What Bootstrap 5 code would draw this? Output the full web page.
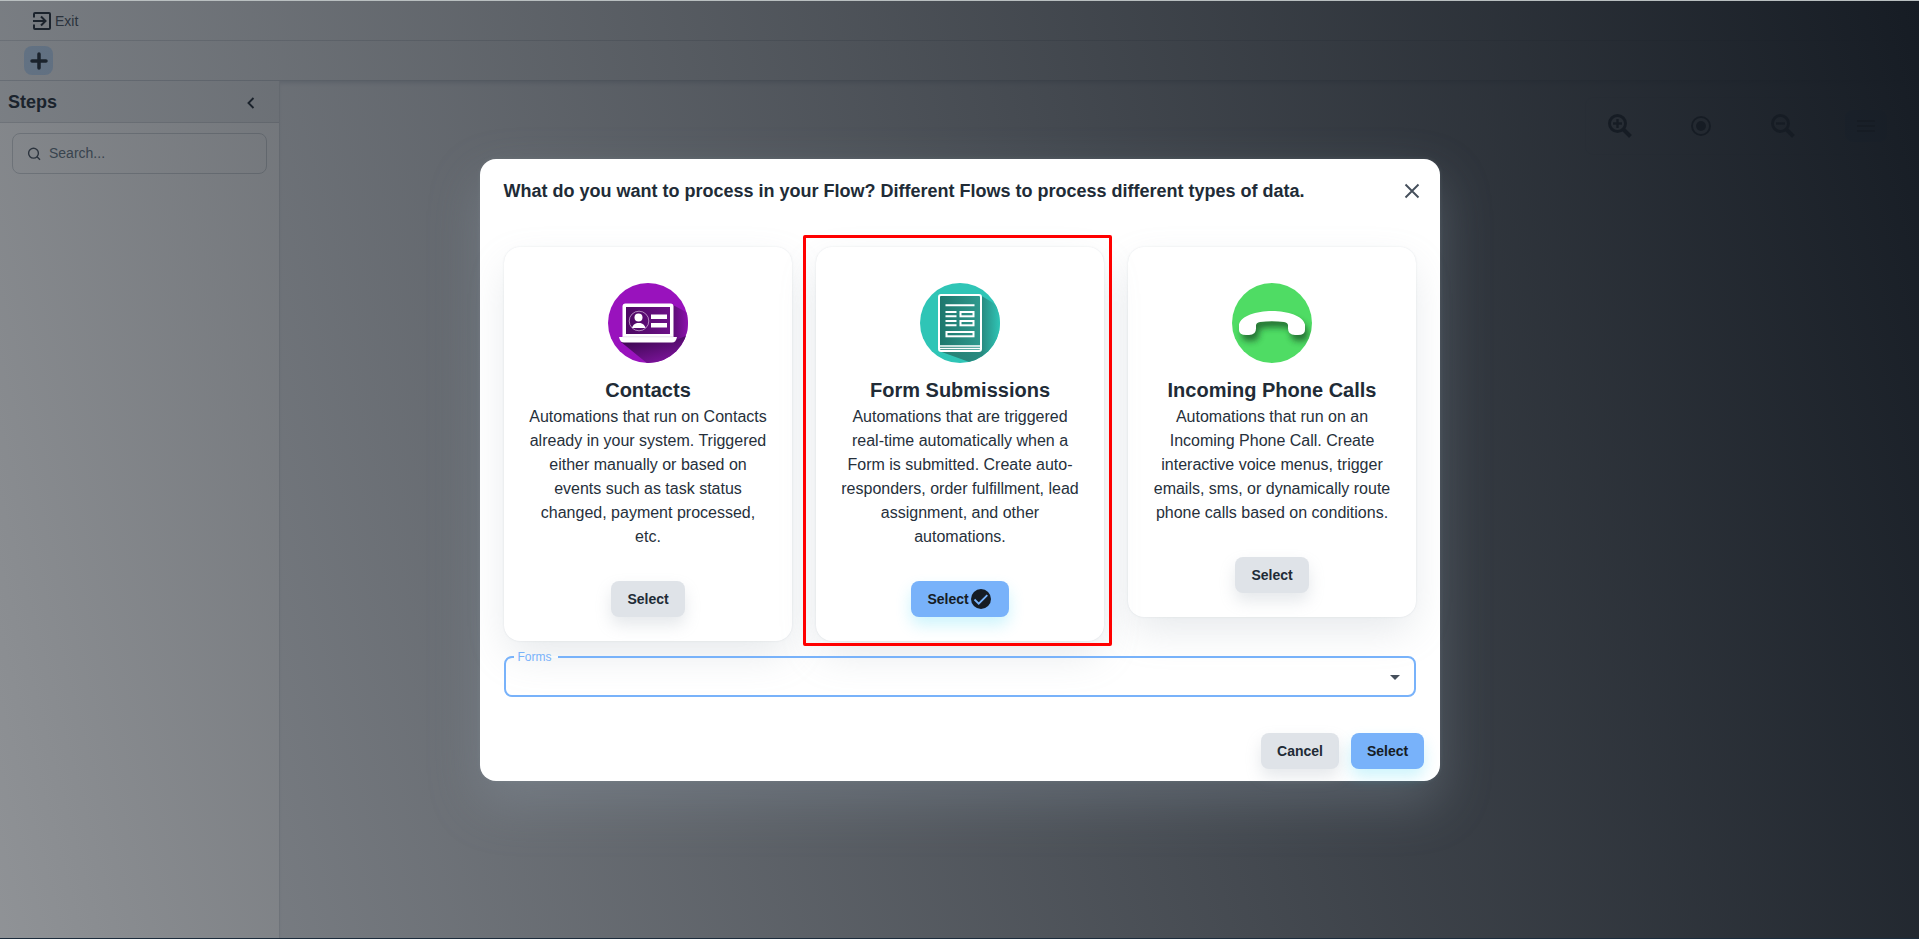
<!DOCTYPE html>
<html lang="en">
<head>
<meta charset="utf-8">
<title>Flow builder</title>
<link href="https://cdn.jsdelivr.net/npm/bootstrap@5.3.0/dist/css/bootstrap.min.css" rel="stylesheet">
<style>
  :root { --ink: #212b36; --grey: #dfe3e8; --blue: #78b2fa; }
  body { font-family: "Liberation Sans", Arial, sans-serif; color: var(--ink); overflow: hidden; background: #fff; }
  .app { height: 939px; background: #fff; }
  .topbar { height: 41px; padding-top: 2px; background: #eceef0; border-bottom: 1px solid #cdd1d6; padding-left: 32px; font-size: 14px; color: #454f5b; }
  .toolbar { height: 40px; background: #eceef0; border-bottom: 1px solid #c6cbd2; padding-left: 24px; }
  .add-btn { width: 29px; height: 29px; border-radius: 8px; background: #bcd6f2; }
  .sidebar { width: 280px; border-right: 1px solid #d9dce0; background: #fff; }
  .side-head { height: 42px; padding: 2px 21px 0 8px; border-bottom: 1px solid #d3d6da; background: #eceef0; font-size: 18px; font-weight: 700; }
  .search-box { margin: 10px 12px; height: 41px; border: 1px solid #d0d4d8; border-radius: 8px; padding-left: 14px; font-size: 14px; color: #637381; }
  .canvas { background: #ebedf0; box-shadow: inset 0 4px 4px -2px #c9ced6; padding: 16px 8px 0 0; }
  .zoom-panel { width: 326px; height: 58px; border: 1px solid #dde0e4; border-radius: 8px; padding: 0 26px 0 21px; }
  .menu-btn { width: 42px; height: 32px; border-radius: 8px; background: #9cc6f5; margin-right: -3px; }
  .veil { background: linear-gradient(75deg, rgba(22,28,36,.48) 0%, rgb(22,28,36) 100%); border-top: 1px solid #b9bfc0; border-bottom: 1px solid #1c2c3c; }
  .dialog { width: 960px; height: 622px; margin-top: 158px; border-radius: 16px; background: #fff; padding: 0 24px;
    box-shadow: 0 0 4px rgba(145,158,171,.2), 0 22px 50px 2px rgba(145,158,171,.3); }
  .dialog-head { height: 88px; padding-bottom: 24px; margin-right: -4px; }
  .dialog-head h2 { font-size: 18px; font-weight: 700; padding-top: 1px; }
  .option { width: 288px; border-radius: 16px; padding: 36px 24px 24px; background: #fff;
    box-shadow: 0 0 2px rgba(145,158,171,.24), 0 16px 40px -4px rgba(145,158,171,.24); }
  .option h3 { font-size: 20px; line-height: 30px; font-weight: 700; margin: 12px 0 0; padding-left: 1px; }
  .option p { font-size: 16px; line-height: 24px; margin: 0 -4px 32px; padding-left: 1px; color: #26303b; }
  .act { height: 36px; border-radius: 8px; font-size: 14px; font-weight: 700; padding: 0 0 0 1px; display: inline-flex; align-items: center; justify-content: center; border: 0; }
  .act-grey { background: var(--grey); color: var(--ink); box-shadow: 0 8px 16px rgba(145,158,171,.24); }
  .act-blue { background: var(--blue); color: #161c24; box-shadow: 0 8px 16px rgba(0,200,240,.2); }
  .highlight { top: -12px; left: -13px; right: -8px; bottom: -5px; border: 3px solid #f00; border-radius: 2px; }
  .select-field { margin-top: 15px; height: 41px; border: 2px solid var(--blue); border-radius: 8px; padding: 2px 14px 0 0; }
  .select-field label { top: -2px; left: 8px; height: 2px; width: 44px; padding-left: 4px; font-size: 12px; line-height: 2px; color: var(--blue); background: #f8f9fa; }
  .dialog-foot { margin: 36px -8px 0 0; gap: 12px; }
</style>
</head>
<body>
<div class="app d-flex flex-column position-relative">
  <header class="topbar d-flex align-items-center">
    <svg width="20" height="20" viewBox="0 0 20 20" fill="none" stroke="#212b36" stroke-width="2"><path d="M2 6.500V3q0-1 1-1h14q1 0 1 1v14q0 1-1 1H3q-1 0-1-1v-3.500M1 10h12M9 5.500l4.500 4.500L9 14.500"/></svg>
    <span style="margin-left:3px">Exit</span>
  </header>
  <div class="toolbar d-flex align-items-center">
    <div class="add-btn d-flex align-items-center justify-content-center">
      <svg width="18" height="18" viewBox="0 0 18 18" stroke="#212b36" stroke-width="3.500" stroke-linecap="round"><path d="M9 2v14M2 9h14"/></svg>
    </div>
  </div>
  <div class="d-flex flex-grow-1">
    <aside class="sidebar">
      <div class="side-head d-flex align-items-center justify-content-between"><span>Steps</span>
        <svg width="14" height="14" viewBox="0 0 14 14" fill="none" stroke="#212b36" stroke-width="1.900"><path d="M9.500 2 4.500 7l5 5"/></svg>
      </div>
      <div class="search-box d-flex align-items-center">
        <svg width="14" height="14" viewBox="0 0 14 14" fill="none" stroke="#454f5b" stroke-width="1.400"><circle cx="6.500" cy="6.200" r="4.900"/><path d="m10 9.800 3 3"/></svg>
        <span class="ms-2">Search...</span>
      </div>
    </aside>
    <main class="canvas flex-grow-1 d-flex justify-content-end">
      <div class="zoom-panel d-flex align-items-center justify-content-between">
        <svg width="26" height="26" viewBox="0 0 26 26" fill="none" stroke="#161c24" stroke-width="3"><circle cx="10.500" cy="10.500" r="8"/><path d="m16.500 16.500 7 7" stroke-width="4"/><path d="M6 10.500h9M10.500 6v9" stroke-width="2.400"/></svg>
        <svg class="ms-2" width="22" height="22" viewBox="0 0 22 22" fill="none" stroke="#161c24" stroke-width="2"><circle cx="11" cy="11" r="9"/><circle cx="11" cy="11" r="5" fill="#161c24" stroke="none"/></svg>
        <svg class="ms-2" width="26" height="26" viewBox="0 0 26 26" fill="none" stroke="#161c24" stroke-width="3"><circle cx="10.500" cy="10.500" r="8"/><path d="m16.500 16.500 7 7" stroke-width="4"/><path d="M6 10.500h9" stroke-width="2.400"/></svg>
        <span class="menu-btn d-flex align-items-center justify-content-center"><svg width="18" height="14" viewBox="0 0 18 14" stroke="#161c24" stroke-width="2"><path d="M0 2h18M0 7h18M0 12h18"/></svg></span>
      </div>
    </main>
  </div>

  <div class="veil position-absolute top-0 start-0 w-100 h-100 d-flex justify-content-center align-items-start">
    <section class="dialog" role="dialog">
      <div class="dialog-head d-flex align-items-center justify-content-between">
        <h2 class="mb-0">What do you want to process in your Flow? Different Flows to process different types of data.</h2>
        <svg width="16" height="16" viewBox="0 0 16 16" stroke="#454f5b" stroke-width="1.900"><path d="m1.500 1.500 13 13m0-13-13 13"/></svg>
      </div>

      <div class="d-flex justify-content-between align-items-start text-center">
        <article class="option">
          <svg class="d-block mx-auto" width="80" height="80" viewBox="0 0 80 80">
            <defs>
              <linearGradient id="pShade" x1="0" y1="0" x2=".6" y2="1"><stop offset="0" stop-color="#2e0440"/><stop offset="1" stop-color="#7d149c"/></linearGradient>
              <linearGradient id="pSide" x1="0" y1="0" x2="1" y2="0"><stop offset="0" stop-color="#5c0d75"/><stop offset="1" stop-color="#8d12ae"/></linearGradient>
              <linearGradient id="pScreen" x1="0" y1="0" x2="1" y2="0"><stop offset="0" stop-color="#4c0862"/><stop offset="1" stop-color="#6d1188"/></linearGradient>
              <clipPath id="disc"><circle cx="40" cy="40" r="40"/></clipPath>
            </defs>
            <g clip-path="url(#disc)">
              <path d="M0 0h80v80H0z" fill="#9912bd"/>
              <path d="M65 22 80 30v29H65z" fill="url(#pSide)"/>
              <path d="m13 59 27 22h40V52l-12 5z" fill="url(#pShade)"/>
            </g>
            <rect x="14.500" y="20.500" width="51" height="36" rx="3" fill="#fff"/>
            <rect x="18" y="24" width="44" height="27" fill="url(#pScreen)"/>
            <path d="M11 54h58q-1 5.500-5 5.500H16q-4 0-5-5.500z" fill="#fff"/>
            <path d="M15 53.800h50" stroke="#d9cfdd" stroke-width=".6"/>
            <circle cx="31" cy="38" r="9.800" fill="none" stroke="#d8bde0" stroke-width=".7"/>
            <circle cx="30.500" cy="34.500" r="4" fill="#fff"/>
            <path d="M24 45q1-4 5-5h3.500q4 1 5 5z" fill="#fff"/>
            <path d="M43 31.500h16v4.500H43zM43 40h16v4.500H43z" fill="#fff"/>
          </svg>
          <h3>Contacts</h3>
          <p>Automations that run on Contacts<br>already in your system. Triggered<br>either manually or based on<br>events such as task status<br>changed, payment processed,<br>etc.</p>
          <button class="btn act act-grey" style="width:74px">Select</button>
        </article>

        <article class="option position-relative">
          <svg class="d-block mx-auto" width="80" height="80" viewBox="0 0 80 80">
            <defs>
              <linearGradient id="tSide" x1="0" y1="0" x2="1" y2="0"><stop offset="0" stop-color="#278074"/><stop offset=".7" stop-color="#288a80"/><stop offset="1" stop-color="#2fc5b6"/></linearGradient>
              <linearGradient id="tPage" x1="0" y1="0" x2="1" y2="0"><stop offset="0" stop-color="#1e766c"/><stop offset="1" stop-color="#2f9a8e"/></linearGradient>
            </defs>
            <g clip-path="url(#disc)">
              <path d="M0 0h80v80H0z" fill="#2fc5b6"/>
              <path d="M60 12 80 24v56H52L19 68z" fill="url(#tSide)"/>
            </g>
            <g fill="none" stroke="#fff" stroke-width="2">
              <rect x="19" y="12" width="42" height="56" rx="2" fill="url(#tPage)"/>
              <path d="M20 63h40M20 65.500h40" stroke-width="1.300"/>
              <path d="M25.500 22.200h29M25.500 29h11M25.500 33.300h11M25.500 38h11M25.500 42.300h11"/>
              <rect x="40.500" y="29" width="13" height="4.300"/>
              <rect x="40.500" y="38" width="13" height="4.300"/>
              <rect x="26.500" y="49" width="27" height="4.300"/>
            </g>
          </svg>
          <h3>Form Submissions</h3>
          <p>Automations that are triggered<br>real-time automatically when a<br>Form is submitted. Create auto-<br>responders, order fulfillment, lead<br>assignment, and other<br>automations.</p>
          <button class="btn act act-blue" style="width:98px">Select<svg width="24" height="24" viewBox="0 0 24 24"><circle cx="12" cy="12" r="10" fill="#161c24"/><path d="m5.500 12.500 4.200 4.200 8.600-8.600" fill="none" stroke="#78b2fa" stroke-width="1.800"/></svg></button>
          <span class="highlight position-absolute"></span>
        </article>

        <article class="option">
          <svg class="d-block mx-auto" width="80" height="80" viewBox="0 0 80 80">
            <defs><filter id="soft" x="-20%" y="-30%" width="140%" height="180%"><feGaussianBlur stdDeviation="3"/></filter></defs>
            <g clip-path="url(#disc)">
              <path d="M0 0h80v80H0z" fill="#4fdc64"/>
              <path transform="translate(3 6)" filter="url(#soft)" fill="#1c5a2a" opacity=".8" d="M7 41.500C9 33 24 28 40 28s31 5 33 13.500V47q0 5-7 5h-3q-7 0-7-6.500v-3q0-3-4-3.500-12-1.500-24 0-4 .5-4 3.500v3Q24 52 17 52h-3q-7 0-7-5z"/>
            </g>
            <path fill="#fff" d="M7 41.500C9 33 24 28 40 28s31 5 33 13.500V47q0 5-7 5h-3q-7 0-7-6.500v-3q0-3-4-3.500-12-1.500-24 0-4 .5-4 3.500v3Q24 52 17 52h-3q-7 0-7-5z"/>
          </svg>
          <h3>Incoming Phone Calls</h3>
          <p>Automations that run on an<br>Incoming Phone Call. Create<br>interactive voice menus, trigger<br>emails, sms, or dynamically route<br>phone calls based on conditions.</p>
          <button class="btn act act-grey" style="width:74px">Select</button>
        </article>
      </div>

      <div class="select-field position-relative d-flex align-items-center justify-content-end">
        <label class="position-absolute">Forms</label>
        <svg width="10" height="5" viewBox="0 0 10 5" fill="#454f5b"><path d="M0 0h10L5 5z"/></svg>
      </div>

      <div class="dialog-foot d-flex justify-content-end">
        <button class="btn act act-grey" style="width:78px">Cancel</button>
        <button class="btn act act-blue" style="width:73px">Select</button>
      </div>
    </section>
  </div>
</div>
<script src="https://cdn.jsdelivr.net/npm/bootstrap@5.3.0/dist/js/bootstrap.bundle.min.js"></script>
</body>
</html>
